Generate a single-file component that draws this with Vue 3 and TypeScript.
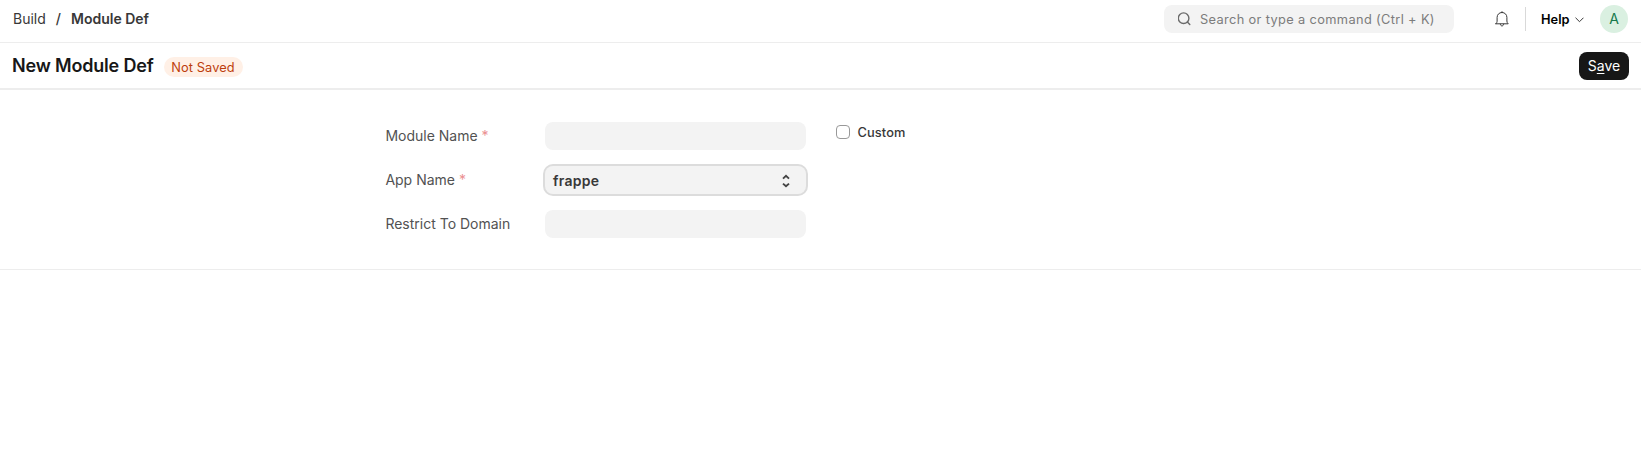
<script setup lang="ts">
import { ref } from 'vue'

interface Field {
  label: string
  required: boolean
  kind: 'text' | 'select'
  value: string
}

const fields = ref<Field[]>([
  { label: 'Module Name', required: true, kind: 'text', value: '' },
  { label: 'App Name', required: true, kind: 'select', value: 'frappe' },
  { label: 'Restrict To Domain', required: false, kind: 'text', value: '' },
])
const custom = ref(false)
</script>

<template>
  <div class="page">
    <header class="navbar">
      <nav class="crumbs">
        <a class="crumb">Build</a>
        <span class="slash">/</span>
        <a class="crumb current">Module Def</a>
      </nav>
      <div class="nav-right">
        <div class="search">
          <svg class="search-icon" width="14" height="14" viewBox="0 0 14 14" fill="none" stroke="#6b6b6b" stroke-width="1.4" stroke-linecap="round">
            <circle cx="5.6" cy="6.2" r="5.3" />
            <path d="M9.4 10l2.4 2.5" />
          </svg>
          <span class="search-text">Search or type a command (Ctrl + K)</span>
        </div>
        <svg class="bell" width="14" height="16" viewBox="0 0 14 16" fill="none" stroke="#383838" stroke-width="1" stroke-linejoin="round" stroke-linecap="round">
          <path d="M.8 12.8h12.4c-.9-.8-1.3-1.7-1.3-2.8V6.4C11.9 3.6 9.8 1.5 7 1.5S2.1 3.6 2.1 6.4V10c0 1.1-.4 2-1.3 2.8z" />
          <path d="M5.4 13.2c0 1 .7 1.7 1.6 1.7s1.6-.7 1.6-1.7M7 .7v.8" />
        </svg>
        <span class="divider"></span>
        <button class="help">
          Help
          <svg class="caret" width="9" height="6" viewBox="0 0 9 6" fill="none" stroke="#383838" stroke-linecap="round" stroke-linejoin="round">
            <path d="M.8 1l3.7 3.7L8.2 1" />
          </svg>
        </button>
        <span class="avatar">A</span>
      </div>
    </header>

    <div class="page-head">
      <h1 class="title">New Module Def</h1>
      <span class="pill">Not Saved</span>
      <button class="save">S<u>a</u>ve</button>
    </div>

    <main class="form">
      <div class="column">
        <div v-for="field in fields" :key="field.label" class="row">
          <label class="label">{{ field.label }}<span v-if="field.required" class="star">*</span></label>
          <div v-if="field.kind === 'select'" class="control focused">
            <span class="value">{{ field.value }}</span>
            <svg class="arrows" width="8" height="14" viewBox="0 0 8 14" fill="none" stroke="#444" stroke-width="1.9">
              <path d="M1 4.6l3-2.7 3 2.7M1 9.6l3 2.7 3-2.7" />
            </svg>
          </div>
          <input v-else v-model="field.value" class="control" type="text" />
        </div>
      </div>
      <label class="check">
        <input v-model="custom" class="box" type="checkbox" />
        <span class="check-text">Custom</span>
      </label>
    </main>
  </div>
</template>

<style>
body {
  background: #fff;
}
</style>

<style scoped>
.page,
.page * {
  box-sizing: border-box;
}
.page {
  min-height: 473px;
  background: #fff;
  font-family: Inter, "Liberation Sans", sans-serif;
  font-size: 14px;
  line-height: 20px;
  letter-spacing: 0;
  color: #383838;
}
button {
  font: inherit;
  border: 0;
  margin: 0;
}
.navbar {
  height: 43px;
  padding: 0 13px 4px;
  border-bottom: 1px solid #ededed;
  display: flex;
  align-items: center;
  justify-content: space-between;
}
.crumbs {
  display: flex;
}
.slash {
  margin: 0 10px;
  font-weight: 500;
}
.current {
  font-weight: 600;
}
.nav-right {
  display: flex;
  align-items: center;
}
.search {
  width: 290px;
  height: 28px;
  border-radius: 8px;
  background: #f3f3f3;
  display: flex;
  align-items: center;
  padding-left: 14px;
}
.search-text {
  margin-left: 8px;
  padding-top: 1px;
  font-size: 12.8px;
  letter-spacing: 0.36px;
  color: #7c7c7c;
  white-space: nowrap;
}
.bell {
  margin-left: 41px;
}
.divider {
  width: 1px;
  height: 24px;
  margin-left: 16px;
  background: #d9d9d9;
}
.help {
  display: flex;
  align-items: center;
  justify-content: space-between;
  margin-left: 15px;
  margin-right: 16px;
  padding: 1px 0 0;
  width: 43px;
  background: none;
  font-size: 12.8px;
  letter-spacing: 0.05px;
  font-weight: 600;
  color: #000;
}
.caret {
  margin-top: 1px;
}
.avatar {
  width: 28px;
  height: 28px;
  border-radius: 50%;
  background: #daf0e1;
  color: #16794c;
  line-height: 28px;
  text-align: center;
}
.page-head {
  height: 47px;
  padding: 0 12px;
  border-bottom: 2px solid #ededed;
  display: flex;
  align-items: center;
}
.title {
  margin: 0;
  font-size: 18px;
  line-height: 24px;
  letter-spacing: -0.18px;
  font-weight: 600;
  color: #171717;
}
.pill {
  width: 79px;
  height: 20px;
  margin: 3px 0 0 10px;
  border-radius: 10px;
  background: #fff0e6;
  color: #bd3e0c;
  font-size: 12.8px;
  line-height: 21px;
  letter-spacing: 0.1px;
  text-align: center;
}
.save {
  width: 50px;
  height: 28px;
  margin: 1px 0 0 auto;
  padding: 0;
  border-radius: 8px;
  background: #171717;
  color: #fff;
}
.save u {
  text-underline-offset: 2px;
}
.form {
  height: 180px;
  padding: 32px 0 0 385px;
  border-bottom: 1px solid #ededed;
  display: flex;
  align-items: flex-start;
}
.column {
  width: 421px;
  display: flex;
  flex-direction: column;
  gap: 16px;
}
.row {
  height: 28px;
  display: flex;
  align-items: center;
}
.label {
  width: 160px;
  padding-left: 0.4px;
  color: #525252;
}
.star {
  margin-left: 4px;
  color: #eb9091;
}
.control {
  width: 261px;
  height: 28px;
  border: 0;
  padding: 0 8px;
  border-radius: 8px;
  background: #f3f3f3;
  font: inherit;
}
.focused {
  display: flex;
  align-items: center;
  justify-content: space-between;
  padding-right: 16px;
  box-shadow: 0 0 0 2px #dcdcdc;
  font-weight: 600;
}
.value {
  padding-top: 2px;
  letter-spacing: 0.28px;
}
.arrows {
  margin-top: 2px;
}
.check {
  display: flex;
  align-items: center;
  margin: 0 0 0 30px;
  font-size: 12.8px;
  letter-spacing: 0.13px;
  font-weight: 500;
}
.check-text {
  height: 20px;
  line-height: 22px;
}
.box {
  appearance: none;
  width: 14px;
  height: 14px;
  margin: 0 7.5px 0 0;
  border: 1px solid #999;
  border-radius: 4px;
}
</style>
